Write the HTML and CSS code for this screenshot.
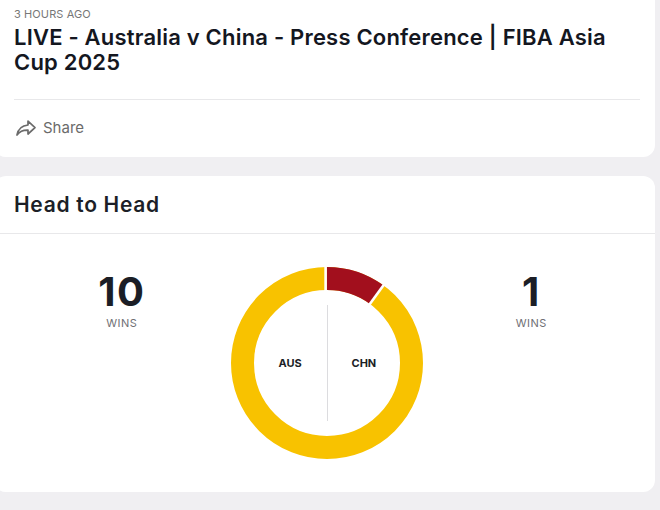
FILE: index.html
```
<!DOCTYPE html>
<html>
<head>
<meta charset="utf-8">
<link rel="stylesheet" href="styles.css">
</head>
<body>
<div class="page">
  <section class="card article">
    <div class="meta">3 HOURS AGO</div>
    <h1 class="title">LIVE - Australia v China - Press Conference | FIBA Asia Cup 2025</h1>
    <div class="rule"></div>
    <div class="share">
      <svg class="share-icon" width="22" height="18" viewBox="0 0 22 18">
        <path d="M13 2.2 L20 8.6 L13 15 L13 11.2 C8 11 4.6 12.6 2 16 C3 10.6 6.4 6.6 13 6 Z" fill="none" stroke="#6b6b6b" stroke-width="1.7" stroke-linejoin="round"/>
      </svg>
      <span>Share</span>
    </div>
  </section>

  <section class="card h2h">
    <h2 class="h2h-title">Head to Head</h2>
    <div class="h2h-body">
      <div class="stat">
        <div class="num">10</div>
        <div class="lbl">WINS</div>
      </div>
      <div class="donut">
        <svg width="194" height="194" viewBox="0 0 194 194">
          <circle cx="97" cy="97" r="84.5" fill="none" stroke="#f8c200" stroke-width="23"/>
          <path d="M97 1 A96 96 0 0 1 153.43 19.33 L139.91 37.94 A73 73 0 0 0 97 24 Z" fill="#a20f1d"/>
          <line x1="95.6" y1="0" x2="95.6" y2="26" stroke="#fff" stroke-width="2.6"/>
          <line x1="139.3" y1="38.75" x2="154.6" y2="17.7" stroke="#fff" stroke-width="2.6"/>
          <line x1="97.5" y1="39" x2="97.5" y2="155" stroke="#dcdcdf" stroke-width="1"/>
        </svg>
        <span class="team aus">AUS</span>
        <span class="team chn">CHN</span>
      </div>
      <div class="stat">
        <div class="num">1</div>
        <div class="lbl">WINS</div>
      </div>
    </div>
  </section>
</div>
</body>
</html>
```

FILE: styles.css
```
html, body {
  margin: 0;
  padding: 0;
  background: #f0eff2;
}
body {
  font-family: Inter, "Noto Sans", sans-serif;
  color: #15181f;
}
.page {
  display: flex;
  flex-direction: column;
  gap: 19px;
  margin: 0 5px 0 -6px;
  width: 661px;
}
.card {
  background: #fff;
  border-radius: 12px;
}
.article {
  margin-top: -12px;
  padding: 19px 15px 0 20px;
  height: 150px;
}
.meta {
  font-size: 11px;
  line-height: 14px;
  color: #777;
  letter-spacing: 0.1px;
}
.title {
  margin: 4px 0 0;
  font-size: 22px;
  line-height: 25px;
  font-weight: 600;
  letter-spacing: 0.2px;
  color: #14171f;
}
.rule {
  margin-top: 24px;
  height: 1px;
  background: #e8e8ea;
}
.share {
  display: flex;
  align-items: center;
  gap: 6px;
  margin-top: 18px;
  color: #6b6b6b;
  font-size: 15px;
  line-height: 20px;
  padding-left: 1px;
}
.h2h-title {
  margin: 0;
  padding: 0 20px;
  height: 57px;
  display: flex;
  align-items: center;
  font-size: 21px;
  font-weight: 600;
  letter-spacing: 0.7px;
  border-bottom: 1px solid #e8e8ea;
  color: #1c1f27;
}
.h2h-body {
  display: grid;
  grid-template-columns: 1fr 194px 1fr;
  padding: 32px 16px 32px 20px;
}
.stat {
  display: flex;
  flex-direction: column;
  align-items: center;
  padding-top: 1px;
}
.num {
  font-size: 40px;
  line-height: 49px;
  font-weight: 700;
  color: #1b1e26;
  letter-spacing: 1.5px;
}
.lbl {
  margin-top: 0;
  font-size: 11px;
  line-height: 14px;
  color: #6f6f74;
  letter-spacing: 0.5px;
}
.donut {
  position: relative;
  width: 194px;
  height: 194px;
}
.donut svg {
  display: block;
}
.team {
  position: absolute;
  top: 90px;
  font-size: 11px;
  line-height: 14px;
  font-weight: 700;
  color: #1b1e26;
}
.aus {
  left: 49px;
}
.chn {
  left: 122px;
}
```
